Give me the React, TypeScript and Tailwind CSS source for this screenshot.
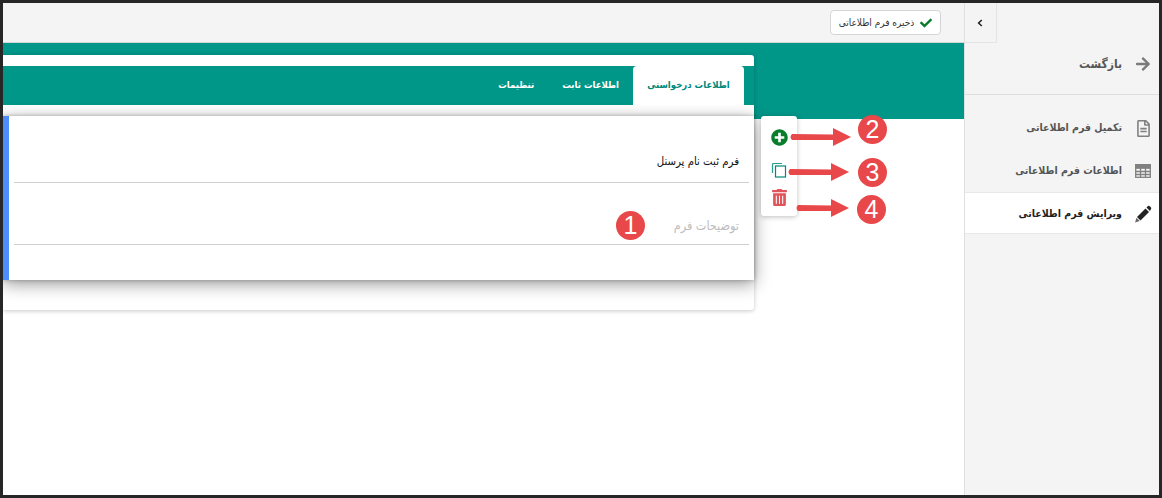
import { FaArrowRight, FaCheck, FaPlusCircle, FaRegFileAlt, FaTrashAlt } from "react-icons/fa";

const fontStack = "font-['DejaVu_Sans_Condensed','DejaVu_Sans',sans-serif]";

function Callout({ label, className }: { label: string; className: string }) {
    return (
        <div className={`absolute w-[29px] h-[29px] rounded-full bg-[#e8484a] text-white text-[25px] leading-[29px] text-center font-['Liberation_Sans',sans-serif] ${className}`}>
            {label}
        </div>
    );
}

function Arrow({ x, y, width }: { x: number; y: number; width: number }) {
    return (
        <svg className="absolute" style={{ left: x, top: y }} width={width} height={18} viewBox={`0 0 ${width} 18`}>
            <path d={`M2 6 L${width - 18} 6.5 L${width - 18} 0 L${width} 9 L${width - 18} 18 L${width - 18} 12 L2 12 Q-1 9 2 6 Z`} fill="#e8484a" />
        </svg>
    );
}

function CopyIcon() {
    return (
        <svg width="16" height="16" viewBox="0 0 16 16" fill="none">
            <path d="M11 1.5H2.5a1 1 0 0 0-1 1V11" stroke="#2a9d92" strokeWidth="1.2" />
            <rect x="4.5" y="4" width="10" height="11" stroke="#00897b" strokeWidth="1.2" fill="#fff" />
        </svg>
    );
}

function TableIcon() {
    return (
        <svg width="16" height="14" viewBox="0 0 16 14" fill="none" stroke="#808080" strokeWidth="1.3">
            <rect x="0.7" y="0.7" width="14.6" height="12.6" />
            <path d="M0.7 4.2H15.3M0.7 7.5H15.3M0.7 10.5H15.3M5.5 2V13M10.5 2V13" />
            <rect x="0.7" y="0.7" width="14.6" height="3" fill="#808080" />
        </svg>
    );
}

function PencilIcon() {
    return (
        <svg width="18" height="18" viewBox="0 0 18 18">
            <path d="M11.5 3.5 L15 7 L6.5 15.5 L3 12 Z" fill="#222" />
            <path d="M12.5 2.5 L14 1 Q15 0.5 16 1.5 L17 2.5 Q17.5 3.5 17 4 L16 6 Z" fill="#222" />
            <path d="M2.5 12.8 L5.7 16 L1 17.5 Z" fill="#666" />
        </svg>
    );
}

function SideItem({ icon, label, active }: { icon: React.ReactNode; label: string; active?: boolean }) {
    return (
        <div dir="rtl" className={`flex items-center gap-[11px] pr-[6px] ${active ? "h-[42px] pt-[1px] bg-white border-y border-[#e8e8e8] text-[#1f1f1f] font-bold" : "h-[43px] pt-[1px] text-[#555] font-bold"}`}>
            <span className="w-[20px] flex justify-center shrink-0">{icon}</span>
            <span className="text-[10.5px] whitespace-nowrap">{label}</span>
        </div>
    );
}

export default function App() {
    return (
        <div className={`relative w-[1162px] h-[498px] border-[3px] border-[#262626] bg-white flex overflow-hidden ${fontStack}`}>
            <div className="w-[961px] shrink-0 flex flex-col">
                <div className="h-[40px] bg-[#f4f4f4] border-b border-[#d6d6d6] flex justify-end items-start pr-[23px] pt-[7px]">
                    <button dir="rtl" className="w-[111px] h-[25px] bg-white border border-[#d5d5d5] rounded-[4px] flex items-center justify-center gap-[6px] text-[10px] text-[#333]">
                        <FaCheck className="text-[12px] text-[#0a7d2c]" />
                        <span className="whitespace-nowrap">ذخیره فرم اطلاعاتی</span>
                    </button>
                </div>
                <div className="h-[76px] bg-[#009688] shrink-0" />
                <div className="-mt-[64px] flex items-start">
                    <div className="w-[751px] h-[255px] bg-white rounded-r-[3px] shadow-[0_1px_4px_rgba(0,0,0,0.22)] pt-[11px] shrink-0">
                        <div dir="rtl" className="h-[39px] bg-[#009688] flex pr-[10px] text-[9.5px] font-bold text-white">
                            <div className="w-[111px] h-[39px] bg-white rounded-t-[4px] text-[#00897b] flex items-center justify-center whitespace-nowrap">اطلاعات درخواستی</div>
                            <div className="flex items-center justify-center px-[14px] whitespace-nowrap">اطلاعات ثابت</div>
                            <div className="flex items-center justify-center px-[14px] whitespace-nowrap">تنظیمات</div>
                        </div>
                        <div className="mt-[11px] h-[164px] bg-white border-l-[6px] border-[#4d8dfa] shadow-[0_4px_16px_rgba(0,0,0,0.4),0_0_4px_rgba(0,0,0,0.25)] px-[5px]">
                            <div dir="rtl" className="h-[67px] border-b border-[#cfcfcf] pr-[10px] pt-[38px] text-[11.3px] leading-[16px] text-[#111]">فرم ثبت نام پرسنل</div>
                            <div dir="rtl" className="h-[62px] border-b border-[#cfcfcf] pr-[10px] pt-[34px] text-[12.5px] leading-[17px] text-[#bdbdbd]">توضیحات فرم</div>
                        </div>
                    </div>
                    <div className="ml-[7px] mt-[61px] w-[36px] h-[100px] bg-white rounded-[3px] shadow-[0_1px_5px_rgba(0,0,0,0.25)] flex flex-col items-center pt-[13px]">
                        <FaPlusCircle className="text-[17px] text-[#0a7d2c]" />
                        <div className="mt-[16px] h-[16px]"><CopyIcon /></div>
                        <FaTrashAlt className="mt-[11px] text-[17px] text-[#e0555a]" />
                    </div>
                </div>
            </div>

            <div className="flex-1 bg-[#f4f4f4] border-l border-[#e0e0e0] flex flex-col">
                <div className="h-[40px] flex">
                    <div className="w-[32px] h-[40px] border-r border-b border-[#e4e4e4] flex items-center justify-center pr-[1px]">
                        <svg width="6" height="8" viewBox="0 0 6 8" fill="none" stroke="#222" strokeWidth="1.5"><path d="M4.8 1 L1.6 4 L4.8 7" /></svg>
                    </div>
                </div>
                <div dir="rtl" className="h-[52px] border-b border-[#dedede] flex items-center gap-[13px] pr-[8px] pb-[9px] text-[#555]">
                    <FaArrowRight className="text-[16px] text-[#7a7a7a]" />
                    <span className="text-[12px] font-bold whitespace-nowrap">بازگشت</span>
                </div>
                <div className="h-[11px]" />
                <SideItem icon={<FaRegFileAlt className="text-[17px] text-[#808080]" />} label="تکمیل فرم اطلاعاتی" />
                <SideItem icon={<TableIcon />} label="اطلاعات فرم اطلاعاتی" />
                <SideItem active icon={<PencilIcon />} label="ویرایش فرم اطلاعاتی" />
            </div>

            <div className="absolute inset-0 pointer-events-none -ml-[3px] -mt-[3px]">
                <Callout label="1" className="left-[616px] top-[211px]" />
                <Callout label="2" className="left-[858px] top-[115px]" />
                <Callout label="3" className="left-[858px] top-[158px]" />
                <Callout label="4" className="left-[857px] top-[195px]" />
                <Arrow x={790} y={128} width={61} />
                <Arrow x={788} y={163} width={61} />
                <Arrow x={796} y={199} width={53} />
            </div>
        </div>
    );
}
